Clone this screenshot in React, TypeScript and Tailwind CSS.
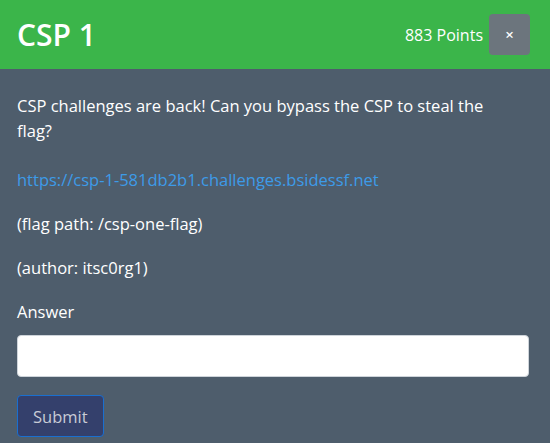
import React from "react";

export default function App() {
  return (
    <div className="w-[550px] h-[443px] overflow-hidden bg-[#4e5d6c] text-white" style={{ fontFamily: '"Open Sans", "Noto Sans", sans-serif' }}>
      <div className="h-[69px] bg-[#3bb54a] flex items-center justify-between pl-[17px] pr-[20px]">
        <h1 className="text-[30px] font-semibold leading-none">CSP 1</h1>
        <div className="flex items-center gap-[6px]">
          <span className="text-[16px]">883 Points</span>
          <button className="w-[41px] h-[41px] rounded-[4px] bg-[#6c757d] text-white text-[15px] font-semibold flex items-center justify-center">×</button>
        </div>
      </div>
      <div className="pl-[17px] pr-[21px] pt-[24px] text-[16.5px] leading-[25px]">
        <p className="mb-[24px] max-w-[490px]">CSP challenges are back! Can you bypass the CSP to steal the flag?</p>
        <p className="mb-[19px] text-[#3d9be8]">https://csp-1-581db2b1.challenges.bsidessf.net</p>
        <p className="mb-[19px]">(flag path: /csp-one-flag)</p>
        <p className="mb-[19px]">(author: itsc0rg1)</p>
        <label className="block mb-[11px]">Answer</label>
        <div className="h-[42px] bg-white rounded-[4px] border border-[#ced4da]" />
        <button className="mt-[18px] h-[42px] px-[15px] rounded-[4px] bg-[#34406c] border border-[#1a6fd0] text-[#c8cbd6]">Submit</button>
      </div>
    </div>
  );
}
